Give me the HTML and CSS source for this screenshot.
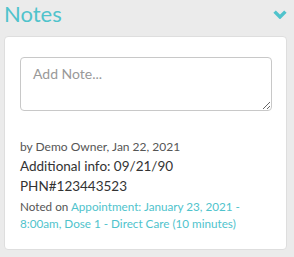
FILE: index.html
```html
<!DOCTYPE html>
<html>
<head>
<meta charset="utf-8">
<link rel="stylesheet" href="styles.css">
</head>
<body>
<div class="panel">
  <div class="header">
    <h2 class="title">Notes</h2>
    <svg class="chevron" width="14" height="9" viewBox="0 0 14 9"><path d="M1.6 1.6 L7 7 L12.4 1.6" fill="none" stroke="#4fc3cc" stroke-width="3.4"/></svg>
  </div>
  <div class="card">
    <textarea class="note-input" placeholder="Add Note..."></textarea>
    <div class="note">
      <div class="meta">by Demo Owner, Jan 22, 2021</div>
      <div class="body">Additional info: 09/21/90</div>
      <div class="body">PHN#123443523</div>
      <p class="noted">Noted on <a class="link">Appointment: January 23, 2021 - 8:00am, Dose 1 - Direct Care (10 minutes)</a></p>
    </div>
  </div>
</div>
</body>
</html>
```

FILE: styles.css
```css
* { box-sizing: border-box; }
body {
  margin: 0;
  background: #ebebeb;
  font-family: Lato, "Open Sans", sans-serif;
}
.panel {
  width: 294px;
  padding: 0 7px 0 4px;
}
.header {
  display: flex;
  justify-content: space-between;
  align-items: flex-start;
  height: 36px;
}
.title {
  margin: 0;
  font-weight: 400;
  font-size: 22px;
  color: #4fc3cc;
  line-height: 28px;
}
.chevron {
  margin-top: 10px;
}
.card {
  background: #fff;
  border: 1px solid #dedede;
  border-radius: 4px;
  padding: 20px 14px 17px 15px;
}
.note-input {
  display: block;
  width: 100%;
  height: 54px;
  border: 1px solid #c8c8c8;
  border-radius: 4px;
  padding: 7px 12px;
  font-family: Lato, sans-serif;
  font-size: 14px;
  color: #333;
  resize: vertical;
}
.note-input::placeholder { color: #999; }
.note {
  margin-top: 27px;
}
.meta {
  font-size: 12px;
  color: #555;
  line-height: 18px;
}
.body {
  font-size: 13.5px;
  color: #333;
  line-height: 20px;
}
.noted {
  margin: 2px 0 0;
  font-size: 11.7px;
  color: #555;
  line-height: 17px;
}
.link { color: #4fc3cc; }
```
